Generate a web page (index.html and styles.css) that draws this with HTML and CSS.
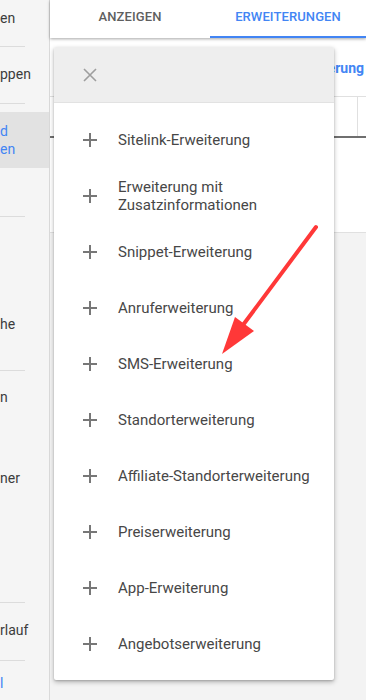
FILE: index.html
```html
<!DOCTYPE html>
<html lang="de">
<head>
<meta charset="utf-8">
<title>Erweiterungen</title>
<link rel="stylesheet" href="styles.css">
</head>
<body>
<div class="app">
  <nav class="sidebar">
    <div class="sec sec1"><div class="s-item">en</div></div>
    <div class="divider"></div>
    <div class="sec sec2"><div class="s-item">ppen</div></div>
    <div class="divider"></div>
    <div class="sec sec3">
      <div class="s-item selected"><span>d</span><span>en</span></div>
      <div class="s-item blank"></div>
    </div>
    <div class="divider"></div>
    <div class="sec sec4"><div class="s-item">he</div></div>
    <div class="divider"></div>
    <div class="sec sec5"><div class="s-item">n</div><div class="s-item gap">ner</div></div>
    <div class="divider"></div>
    <div class="sec sec6"><div class="s-item">rlauf</div></div>
    <div class="divider"></div>
    <div class="sec sec7"><div class="s-item link">l</div></div>
  </nav>
  <main class="main">
    <header class="tabs">
      <div class="tab tab-ads">ANZEIGEN</div>
      <div class="tab tab-ext active">ERWEITERUNGEN</div>
    </header>
    <section class="content">
      <div class="content-top"><span class="content-link">Erweiterung</span></div>
      <div class="table-head"><div class="th-cell"></div><div class="th-cell small"></div></div>
    </section>
    <section class="lower"></section>

    <div class="menu">
      <div class="menu-head">
        <svg class="close" width="14" height="14" viewBox="0 0 14 14"><path d="M1 1 L13 13 M13 1 L1 13" stroke="#9e9e9e" stroke-width="1.6" fill="none"/></svg>
      </div>
      <ul class="menu-list">
        <li class="menu-item"><span class="plus"></span><span class="label">Sitelink-Erweiterung</span></li>
        <li class="menu-item"><span class="plus"></span><span class="label">Erweiterung mit<br>Zusatzinformationen</span></li>
        <li class="menu-item"><span class="plus"></span><span class="label">Snippet-Erweiterung</span></li>
        <li class="menu-item"><span class="plus"></span><span class="label">Anruferweiterung</span></li>
        <li class="menu-item"><span class="plus"></span><span class="label">SMS-Erweiterung</span></li>
        <li class="menu-item"><span class="plus"></span><span class="label">Standorterweiterung</span></li>
        <li class="menu-item"><span class="plus"></span><span class="label">Affiliate-Standorterweiterung</span></li>
        <li class="menu-item"><span class="plus"></span><span class="label">Preiserweiterung</span></li>
        <li class="menu-item"><span class="plus"></span><span class="label">App-Erweiterung</span></li>
        <li class="menu-item"><span class="plus"></span><span class="label">Angebotserweiterung</span></li>
      </ul>
    </div>
  </main>
  <svg class="arrow" width="366" height="700" viewBox="0 0 366 700">
    <line x1="316" y1="227" x2="243" y2="325" stroke="#ff3838" stroke-width="4" stroke-linecap="round"/>
    <polygon points="222,354 235,317 254,331" fill="#ff3838"/>
  </svg>
</div>
</body>
</html>
```

FILE: styles.css
```css
* { box-sizing: border-box; }
html, body { margin: 0; padding: 0; }
body {
  font-family: Roboto, "Noto Sans", Arial, sans-serif;
  width: 366px;
  height: 700px;
  overflow: hidden;
  background: #fff;
}
.app {
  position: relative;
  display: flex;
  width: 366px;
  height: 700px;
  overflow: hidden;
}

/* Sidebar */
.sidebar {
  width: 50px;
  flex: 0 0 50px;
  background: #f5f5f5;
  border-right: 1px solid #dadada;
  display: flex;
  flex-direction: column;
  font-size: 14px;
  line-height: 18px;
  color: #3c3c3c;
  overflow: hidden;
}
.divider {
  width: 25px;
  height: 1px;
  background: #dcdcdc;
  flex: 0 0 1px;
}
.sec { display: flex; flex-direction: column; }
.sec1 { height: 46px; padding-top: 9px; }
.sec2 { height: 56px; padding-top: 18px; }
.sec3 { height: 112px; padding-top: 8px; }
.sec4 { height: 153px; padding-top: 98px; }
.sec5 { height: 231px; padding-top: 17px; }
.sec6 { height: 57px; padding-top: 18px; }
.sec7 { flex: 1; padding-top: 13px; }
.s-item { white-space: nowrap; }
.s-item.gap { margin-top: 63px; }
.s-item.selected {
  height: 56px;
  background: #e2e2e2;
  color: #4285f4;
  display: flex;
  flex-direction: column;
  justify-content: center;
  margin-right: -1px;
}
.s-item.blank { height: 48px; }
.s-item.link { color: #4285f4; }

/* Main */
.main {
  position: relative;
  flex: 1;
  display: flex;
  flex-direction: column;
}
.tabs {
  height: 38px;
  flex: 0 0 38px;
  display: flex;
  background: #fff;
  box-shadow: 0 1px 3px rgba(0,0,0,0.35);
  position: relative;
  z-index: 1;
}
.tab {
  display: flex;
  align-items: center;
  justify-content: center;
  font-size: 13px;
  font-weight: 500;
  color: #5f5f5f;
  letter-spacing: 0.1px;
  padding-bottom: 6px;
}
.tab-ads { width: 160px; }
.tab-ext { flex: 1; }
.tab.active {
  color: #4285f4;
  border-bottom: 2px solid #4285f4;
  padding-bottom: 4px;
}
.content {
  height: 195px;
  flex: 0 0 195px;
  background: #fff;
  border-bottom: 1px solid #e0e0e0;
}
.content-top {
  height: 58px;
  display: flex;
  justify-content: flex-end;
  align-items: center;
  padding-top: 2px;
}
.content-link {
  font-size: 14px;
  font-weight: 700;
  color: #4285f4;
  margin-right: 2px;
}
.table-head {
  height: 42px;
  display: flex;
  border-top: 1px solid #e0e0e0;
  border-bottom: 2px solid #6f6f6f;
}
.th-cell { flex: 1; border-right: 1px solid #e0e0e0; }
.th-cell.small { flex: 0 0 8px; border-right: 0; }
.lower { flex: 1; background: #f3f3f3; }

/* Menu overlay */
.menu {
  position: absolute;
  left: 4px;
  top: 47px;
  width: 280px;
  background: #fff;
  border-radius: 2px;
  box-shadow: 0 2px 5px rgba(0,0,0,0.28), 0 1px 2px rgba(0,0,0,0.14);
  z-index: 2;
}
.menu-head {
  height: 56px;
  background: #eeeeee;
  border-bottom: 1px solid #e2e2e2;
  display: flex;
  align-items: center;
  padding-left: 29px;
  border-radius: 2px 2px 0 0;
}
.close { display: block; }
.menu-list {
  list-style: none;
  margin: 0;
  padding: 9px 0 8px;
}
.menu-item {
  height: 56px;
  display: flex;
  align-items: center;
  font-size: 15px;
  line-height: 18px;
  color: #474747;
}
.plus {
  position: relative;
  width: 14px;
  height: 14px;
  margin-left: 29px;
  margin-right: 21px;
  flex: 0 0 14px;
}
.plus::before, .plus::after {
  content: "";
  position: absolute;
  background: #777;
}
.plus::before { left: 0; right: 0; top: 6px; height: 2px; }
.plus::after { top: 0; bottom: 0; left: 6px; width: 2px; }

.arrow {
  position: absolute;
  left: 0;
  top: 0;
  z-index: 5;
  pointer-events: none;
}
```
